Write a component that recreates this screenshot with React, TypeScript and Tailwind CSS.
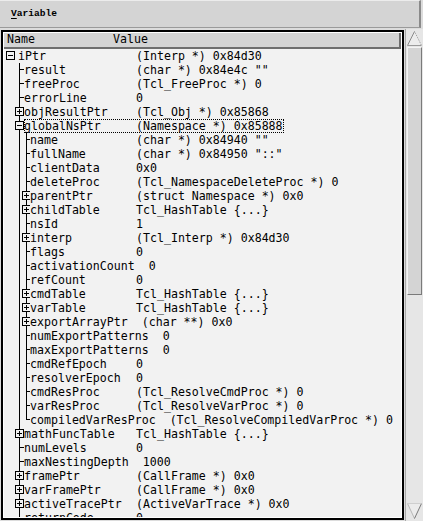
import React from "react";

type Exp = "plus" | "minus" | undefined;
type R = { n: string; v: string; l: 0 | 1 | 2; e?: Exp; last?: boolean; sel?: boolean };

const rows: R[] = [
  { n: "iPtr", v: "(Interp *) 0x84d30", l: 0, e: "minus" },
  { n: "result", v: '(char *) 0x84e4c ""', l: 1 },
  { n: "freeProc", v: "(Tcl_FreeProc *) 0", l: 1 },
  { n: "errorLine", v: "0", l: 1 },
  { n: "objResultPtr", v: "(Tcl_Obj *) 0x85868", l: 1, e: "plus" },
  { n: "globalNsPtr", v: "(Namespace *) 0x85888", l: 1, e: "minus", sel: true },
  { n: "name", v: '(char *) 0x84940 ""', l: 2 },
  { n: "fullName", v: '(char *) 0x84950 "::"', l: 2 },
  { n: "clientData", v: "0x0", l: 2 },
  { n: "deleteProc", v: "(Tcl_NamespaceDeleteProc *) 0", l: 2 },
  { n: "parentPtr", v: "(struct Namespace *) 0x0", l: 2, e: "plus" },
  { n: "childTable", v: "Tcl_HashTable {...}", l: 2, e: "plus" },
  { n: "nsId", v: "1", l: 2 },
  { n: "interp", v: "(Tcl_Interp *) 0x84d30", l: 2, e: "plus" },
  { n: "flags", v: "0", l: 2 },
  { n: "activationCount", v: "0", l: 2 },
  { n: "refCount", v: "0", l: 2 },
  { n: "cmdTable", v: "Tcl_HashTable {...}", l: 2, e: "plus" },
  { n: "varTable", v: "Tcl_HashTable {...}", l: 2, e: "plus" },
  { n: "exportArrayPtr", v: "(char **) 0x0", l: 2, e: "plus" },
  { n: "numExportPatterns", v: "0", l: 2 },
  { n: "maxExportPatterns", v: "0", l: 2 },
  { n: "cmdRefEpoch", v: "0", l: 2 },
  { n: "resolverEpoch", v: "0", l: 2 },
  { n: "cmdResProc", v: "(Tcl_ResolveCmdProc *) 0", l: 2 },
  { n: "varResProc", v: "(Tcl_ResolveVarProc *) 0", l: 2 },
  { n: "compiledVarResProc", v: "(Tcl_ResolveCompiledVarProc *) 0", l: 2, last: true },
  { n: "mathFuncTable", v: "Tcl_HashTable {...}", l: 1, e: "plus" },
  { n: "numLevels", v: "0", l: 1 },
  { n: "maxNestingDepth", v: "1000", l: 1 },
  { n: "framePtr", v: "(CallFrame *) 0x0", l: 1, e: "plus" },
  { n: "varFramePtr", v: "(CallFrame *) 0x0", l: 1, e: "plus" },
  { n: "activeTracePtr", v: "(ActiveVarTrace *) 0x0", l: 1, e: "plus" },
  { n: "returnCode", v: "0", l: 1 },
];

function Box({ cx, e }: { cx: number; e: Exp }) {
  const x0 = cx - 4;
  return (
    <g>
      <rect x={x0 + 0.5} y={2.5} width={8} height={8} fill="#f2f2f2" stroke="#000" strokeWidth={1} />
      <line x1={x0 + 2} y1={6.5} x2={x0 + 7} y2={6.5} stroke="#000" strokeWidth={1} />
      {e === "plus" && <line x1={cx + 0.5} y1={4} x2={cx + 0.5} y2={9} stroke="#000" strokeWidth={1} />}
    </g>
  );
}

function Lines({ r }: { r: R }) {
  if (r.l === 0) {
    return (
      <svg width={14} height={14} className="shrink-0">
        <Box cx={6} e={r.e} />
      </svg>
    );
  }
  if (r.l === 1) {
    return (
      <svg width={20} height={14} className="shrink-0">
        <line x1={15.5} y1={0} x2={15.5} y2={14} stroke="#000" strokeWidth={1} />
        <line x1={15} y1={6.5} x2={20} y2={6.5} stroke="#000" strokeWidth={1} />
        {r.e && <Box cx={15} e={r.e} />}
      </svg>
    );
  }
  return (
    <svg width={26} height={14} className="shrink-0">
      <line x1={15.5} y1={0} x2={15.5} y2={14} stroke="#000" strokeWidth={1} />
      <line x1={22.5} y1={0} x2={22.5} y2={r.last ? 7 : 14} stroke="#000" strokeWidth={1} />
      <line x1={22} y1={6.5} x2={26} y2={6.5} stroke="#000" strokeWidth={1} />
      {r.e && <Box cx={22} e={r.e} />}
    </svg>
  );
}

const minW = ["min-w-[104px]", "min-w-[98px]", "min-w-[92px]"];

function Row({ r }: { r: R }) {
  return (
    <div className="flex h-[14px] shrink-0 items-center whitespace-nowrap leading-[14px]">
      <Lines r={r} />
      <span
        className={
          r.sel
            ? "flex h-[14px] items-center pr-[1px] outline-1 outline-dotted outline-black -outline-offset-1"
            : "flex h-[14px] items-center"
        }
      >
        <span className={minW[r.l]}>{r.n}</span>
        <span className="ml-[14px]">{r.v}</span>
      </span>
    </div>
  );
}

export default function App() {
  return (
    <div
      className="flex h-[521px] w-[423px] flex-col overflow-hidden bg-[#dcdcdc] text-black"
      style={{ fontFamily: '"DejaVu Sans Mono", monospace' }}
    >
      <div className="flex h-[28px] w-[421px] shrink-0 items-center border-b border-r-2 border-t border-b-[#9a9a9a] border-r-[#8a8a8a] border-t-[#ececec] bg-[#d4d4d4] pl-[11px]">
        <span
          className="text-[9.6px] font-bold leading-none"
          style={{ fontFamily: '"Liberation Mono", monospace' }}
        >
          <span className="underline underline-offset-2">V</span>ariable
        </span>
      </div>
      <div className="flex min-h-0 flex-1">
        <div className="ml-[1px] mt-[2px] flex h-[490px] w-[403px] flex-col border-2 border-black bg-white p-[1px] text-[11.6px]">
          <div className="flex h-[16px] shrink-0 items-center border-b-2 border-r-2 border-[#6e6e6e] bg-[#d4d4d4] pl-[3px]">
            <span className="w-[106px]">Name</span>
            <span>Value</span>
          </div>
          <div className="flex min-h-0 flex-1 flex-col overflow-hidden bg-[#f2f2f2]">
            {rows.map((r) => (
              <Row key={r.n} r={r} />
            ))}
          </div>
        </div>
        <div className="ml-[1px] mt-[1px] flex w-[18px] flex-col border-l border-[#a8a8a8] bg-[#e6e6e6] pb-[2px] pl-[1px] pr-[1px] pt-[2px]">
          <svg width={15} height={15} className="shrink-0">
            <polygon points="7.5,0.5 0.5,14.5 14.5,14.5" fill="#ececec" />
            <line x1={7.5} y1={0.5} x2={0.5} y2={14.5} stroke="#8a8a8a" strokeWidth={1} />
            <line x1={7.5} y1={0.5} x2={14.5} y2={14.5} stroke="#9a9a9a" strokeWidth={1} strokeDasharray="1 1" />
            <line x1={0.5} y1={14.5} x2={14.5} y2={14.5} stroke="#9a9a9a" strokeWidth={1} />
          </svg>
          <div className="mt-[1px] h-[248px] shrink-0 border border-b-[#7a7a7a] border-l-[#f4f4f4] border-r-[#7a7a7a] border-t-[#f4f4f4] bg-[#d4d4d4]" />
          <div className="flex-1" />
          <svg width={15} height={16} className="shrink-0">
            <polygon points="0.5,0.5 14.5,0.5 7.5,15.5" fill="#ececec" />
            <line x1={0.5} y1={0.5} x2={7.5} y2={15.5} stroke="#b8b8b8" strokeWidth={1} />
            <line x1={14.5} y1={0.5} x2={7.5} y2={15.5} stroke="#7a7a7a" strokeWidth={1} />
            <line x1={0.5} y1={0.5} x2={14.5} y2={0.5} stroke="#cfcfcf" strokeWidth={1} />
          </svg>
        </div>
      </div>
    </div>
  );
}
